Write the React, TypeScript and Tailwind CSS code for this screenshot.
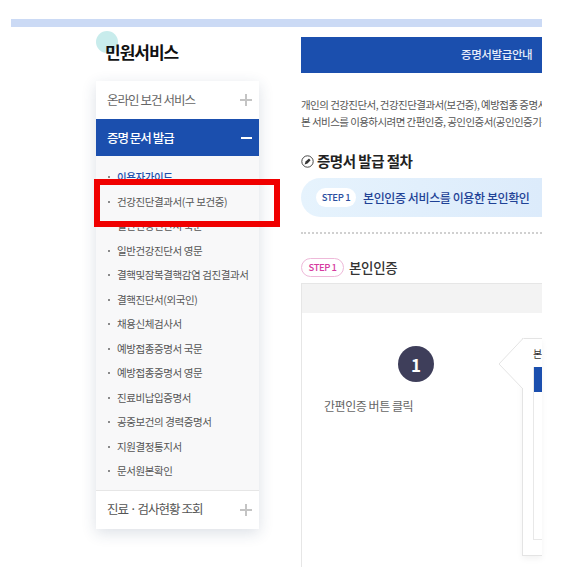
import React from 'react';

const font = { fontFamily: '"Noto Sans CJK KR", "Noto Sans", sans-serif' };

const documents = [
  '이용자가이드',
  '건강진단결과서(구 보건증)',
  '일반건강진단서 국문',
  '일반건강진단서 영문',
  '결핵및잠복결핵감염 검진결과서',
  '결핵진단서(외국인)',
  '채용신체검사서',
  '예방접종증명서 국문',
  '예방접종증명서 영문',
  '진료비납입증명서',
  '공중보건의 경력증명서',
  '지원결정통지서',
  '문서원본확인',
];

function Plus() {
  return (
    <svg width="12" height="12" viewBox="0 0 12 12" className="shrink-0">
      <path d="M6 0v12M0 6h12" stroke="#c4c4c4" strokeWidth="2" />
    </svg>
  );
}

function Sidebar() {
  return (
    <div className="w-[163px] shrink-0 ml-[85px]">
      <div className="relative h-[54px] pt-[12px]">
        <div className="absolute left-0 top-[4px] w-[22px] h-[22px] rounded-full bg-[#c8ecec]" />
        <h2 className="relative ml-[9px] text-[17px] leading-[26px] font-bold tracking-[-1px] text-[#111]">민원서비스</h2>
      </div>
      <div className="bg-white shadow-[0_4px_14px_rgba(40,60,100,0.16)]">
        <div className="h-[38px] flex items-center justify-between pl-[11px] pr-[7px] text-[12.5px] tracking-[-0.95px] text-[#666]">
          <span>온라인 보건 서비스</span>
          <Plus />
        </div>
        <div className="h-[37px] flex items-center justify-between pl-[11px] pr-[7px] bg-[#1b4fae] text-[12.5px] font-medium tracking-[-1px] text-white">
          <span className="pt-[1px]">증명 문서 발급</span>
          <span className="w-[11px] h-[2px] bg-white" />
        </div>
        <ul className="bg-[#f8f8f9] pt-[9px] pb-[6px] border-b border-[#e6e6e6]">
          {documents.map((name, i) => (
            <li
              key={name}
              className={`h-[24.5px] flex items-center pl-[12px] text-[10.5px] tracking-[-0.4px] ${i === 0 ? 'text-[#1b4fae] font-medium' : 'text-[#555]'}`}
            >
              <span className="w-[2px] h-[2px] rounded-full bg-[#666] mr-[7px]" />
              {name}
            </li>
          ))}
        </ul>
        <div className="h-[38px] flex items-center justify-between pl-[11px] pr-[7px] text-[12.5px] tracking-[-1px] text-[#555]">
          <span>진료 · 검사현황 조회</span>
          <Plus />
        </div>
      </div>
    </div>
  );
}

function Content() {
  return (
    <div className="flex-1 min-w-0 ml-[42px] pt-[10px]">
      <div className="h-[36px] bg-[#1b4fae] flex items-center whitespace-nowrap pl-[160px] text-[11.5px] font-medium tracking-[-0.4px] text-[#e8eefa]">
        증명서발급안내
      </div>
      <div className="mt-[23px] text-[10.5px] leading-[17px] tracking-[-0.55px] text-[#555] whitespace-nowrap overflow-hidden">
        <p>개인의 건강진단서, 건강진단결과서(보건증), 예방접종 증명서</p>
        <p>본 서비스를 이용하시려면 간편인증, 공인인증서(공인인증기관</p>
      </div>
      <div className="mt-[19px] flex items-center gap-[3px] h-[24px]">
        <svg width="13" height="13" viewBox="0 0 13 13" className="shrink-0">
          <circle cx="6.5" cy="6.5" r="5.7" fill="none" stroke="#333" strokeWidth="0.9" />
          <path d="M3.6 9.4l1-2.9 3.4-3 1.6 1.7-3.1 3.2z" fill="#333" />
        </svg>
        <h3 className="text-[14.5px] font-bold tracking-[-0.5px] text-[#222] whitespace-nowrap">증명서 발급 절차</h3>
      </div>
      <div className="mt-[5px] h-[39px] rounded-l-[20px] bg-gradient-to-r from-[#e6f3fd] to-[#dcebfb] flex items-center pl-[15px] whitespace-nowrap overflow-hidden">
        <span className="w-[40px] h-[19px] rounded-full bg-white flex items-center justify-center text-[9.5px] font-medium tracking-[-0.4px] text-[#2b4f9f]">STEP 1</span>
        <span className="ml-[7px] text-[12px] font-medium tracking-[-0.4px] text-[#1f4296]">본인인증 서비스를 이용한 본인확인</span>
      </div>
      <div className="mt-[15px] border-t-2 border-dotted border-[#d0d0d0] h-0" />
      <div className="mt-[23px] h-[20px] flex items-center gap-[5px]">
        <span className="w-[43px] h-[19px] rounded-full bg-white border border-[#eeb9d9] flex items-center justify-center text-[9.5px] font-medium tracking-[-0.5px] text-[#d63ba0]">STEP 1</span>
        <span className="text-[13.5px] font-medium tracking-[-0.3px] text-[#333]">본인인증</span>
      </div>
      <div className="mt-[6px] h-[284px] border-l border-t border-[#e6e6e6]">
        <div className="h-[29px] bg-[#f3f3f3]" />
        <div className="flex h-[255px]">
          <div className="w-[220px] shrink-0 pt-[33px] pl-[22px]">
            <div className="ml-[74px] w-[36px] h-[36px] rounded-full bg-[#3e3e5a] flex items-center justify-center text-[17px] font-bold leading-none text-white">1</div>
            <p className="mt-[14px] text-[12px] leading-[20px] tracking-[-0.45px] text-[#666] whitespace-nowrap">간편인증 버튼 클릭</p>
          </div>
          <div className="relative mt-[25px] mb-[12px] flex-1 min-w-0 bg-white border-l border-t border-b border-[#e4e4e4] shadow-[0_3px_6px_rgba(0,0,0,0.05)] pl-[10px] pt-[5px]">
            <svg width="26" height="52" viewBox="0 0 26 52" className="absolute left-[-25px] top-[-1px]">
              <path d="M25 0.5L1 26L25 51H26V0.5z" fill="white" />
              <path d="M25 0.5L1 26L25 51" fill="none" stroke="#e4e4e4" />
            </svg>
            <p className="text-[10px] leading-[20px] text-[#333] whitespace-nowrap overflow-hidden">본인인증</p>
            <div className="mt-[3px] h-[173px] border-l border-b border-[#e8e8e8]">
              <div className="h-[25px] bg-[#1b4fae]" />
            </div>
          </div>
        </div>
      </div>
    </div>
  );
}

export default function App() {
  return (
    <div className="relative w-[562px] h-[582px] bg-white overflow-hidden" style={font}>
      <div className="ml-[11px] w-[531px] pt-[19px]">
        <div className="h-[8px] bg-[#cbdaf5]" />
        <div className="flex">
          <Sidebar />
          <Content />
        </div>
      </div>
      <div className="absolute left-[94px] top-[179px] w-[186px] h-[48px] border-[6px] border-[#f00000]" />
    </div>
  );
}
